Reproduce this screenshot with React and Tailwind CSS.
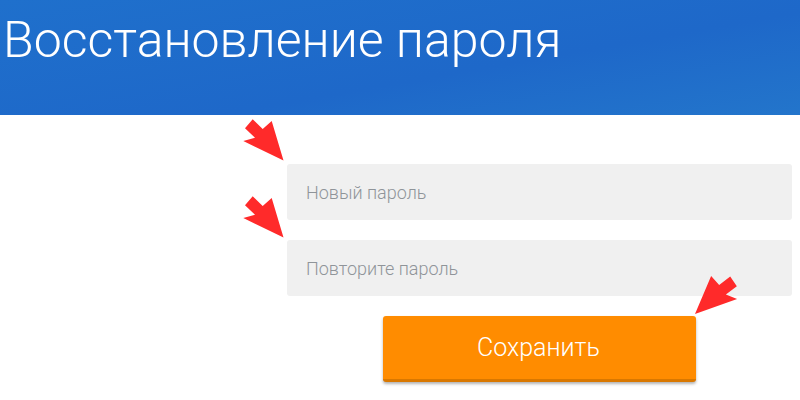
export default function App() {
  const arrow = "-30.8,-41.2 -20.8,-31.5 -11.8,-39.5 0,0 -40.2,-19.5 -28.5,-22.8 -38.5,-32.2";
  return (
    <div className="relative w-[800px] h-[400px] bg-white overflow-hidden" style={{ fontFamily: "Roboto, 'Liberation Sans', sans-serif" }}>
      <div className="h-[115px] w-full bg-[linear-gradient(170deg,#1f70cc_0%,#1e68c9_60%,#2375cb_100%)] pl-[3px] pt-[15px]">
        <h1 className="text-[50px] leading-none font-light text-white tracking-normal">Восстановление пароля</h1>
      </div>
      <div className="ml-[287px] w-[505px] mt-[49px] flex flex-col gap-[20px]">
        <input
          className="h-[56px] w-full rounded-[3px] bg-[#f0f0f0] pl-[19px] text-[18px] font-light text-[#555] outline-none placeholder:text-[#8f9499]"
          placeholder="Новый пароль"
          type="password"
        />
        <input
          className="h-[56px] w-full rounded-[3px] bg-[#f0f0f0] pl-[19px] text-[18px] font-light text-[#555] outline-none placeholder:text-[#8f9499]"
          placeholder="Повторите пароль"
          type="password"
        />
        <div className="flex justify-center">
          <button className="h-[66px] w-[313px] rounded-[3px] bg-[#ff8c00] border-b-[3px] border-[#d97800] text-[25px] font-light text-white shadow-[0_2px_3px_rgba(0,0,0,0.3)] pr-[2px]">
            Сохранить
          </button>
        </div>
      </div>
      <svg className="absolute inset-0 pointer-events-none" width="800" height="400">
        <polygon points={arrow} fill="#ff2a2a" transform="translate(283.5,160.5)" />
        <polygon points={arrow} fill="#ff2a2a" transform="translate(283.5,237.5)" />
        <polygon points={arrow} fill="#ff2a2a" transform="translate(695,314) rotate(6.4) scale(-1,1)" />
      </svg>
    </div>
  );
}
